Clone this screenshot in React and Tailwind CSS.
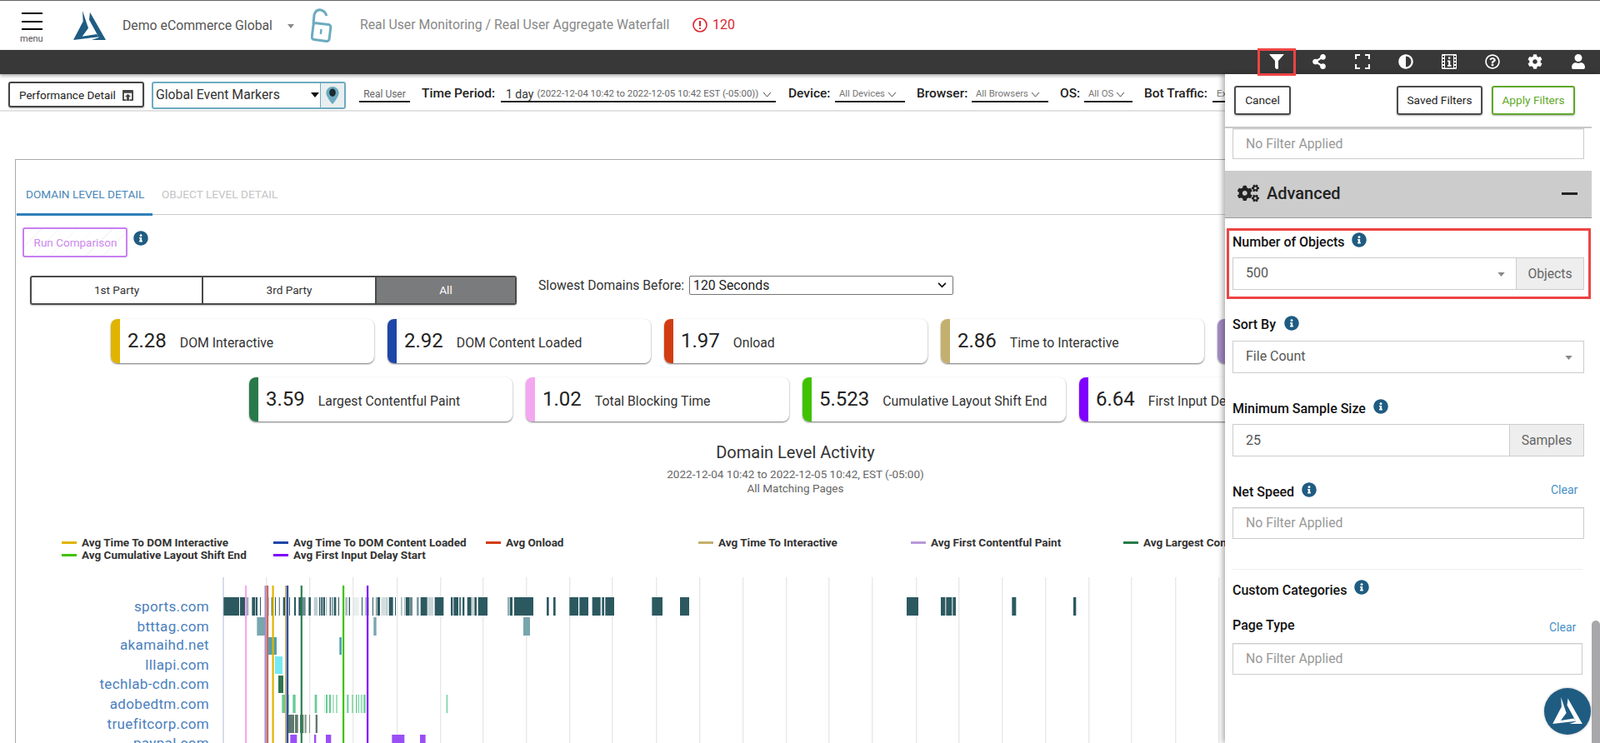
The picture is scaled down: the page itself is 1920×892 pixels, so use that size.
import React from "react";
import { FaShareAlt, FaAdjust, FaCog, FaUser, FaCogs, FaInfoCircle, FaRegQuestionCircle } from "react-icons/fa";

const z10 = (list) => list.map(([a, b, o]) => [255 + a / 3, (b - a) / 3, o]);
const z8 = (list) => list.map(([a, b, o]) => [500 + a / 3, (b - a) / 3, o]);
const z9 = (list) => list.map(([a, b, o]) => [980 + a / 3, (b - a) / 3, o]);

const sports = [
  ...z10([[40,96],[99,125],[126,131,0.35],[142,154],[156,162],[171,174],[197,202],[212,216],[225,228],[239,243,0.7],[254,262],[276,279],[294,300],[310,325],[325,335,0.7],[346,354],[365,378,0.3],[384,388],[391,397],[399,405],[408,412,0.4],[422,426],[430,433],[437,445],[453,456],[478,486,0.4],[491,495],[507,527,0.1],[537,540],[549,563,0.4],[576,579],[589,592],[594,603],[607,625,0.2],[626,630,0.4],[635,650],[657,660],[678,683,0.4],[690,695,0.4],[696,710],[711,720,0.7]]),
  ...z8([[0,8,0.6],[14,30],[30,38],[40,60,0.25],[65,97],[123,130],[133,150],[153,160,0.8],[165,172],[182,197],[200,205,0.4],[208,216],[221,255],[327,333,0.5],[335,345],[351,420],[468,476],[492,500],[550,582],[586,618],[632,662],[667,675],[679,711],[847,885],[948,981]]),
  ...z9([[324,366],[447,463],[466,487],[490,501],[703,718],[924,934]]),
];
const rows = [
  { y: 717, h: 22, fill: "#2c5960", bars: sports },
  { y: 741, h: 22, fill: "#78a6ad", bars: [...z10([[160,190],[580,590]]), ...z8([[384,408]])] },
  { y: 765, h: 21, fill: "#509fac", bars: z10([[196,231],[457,465]]) },
  { y: 788, h: 21, fill: "#74e9f3", bars: z10([[225,252]]) },
  { y: 811, h: 21, fill: "#2f7350", bars: z10([[237,255]]) },
  { y: 834, h: 22, fill: "#68cb92", bars: [...z10([[250,275],[289,299],[368,376],[403,405,0.5],[408,414],[420,426],[432,438,0.5],[444,450,0.6],[484,490],[502,506],[516,520],[525,528],[533,540,0.6],[544,551]]), ...z8([[107,111]])] },
  { y: 858, h: 22, fill: "#5f7a6c", bars: z10([[272,294],[297,308],[315,328],[332,338,0.8],[348,351,0.8],[371,378]]) },
  { y: 882, h: 22, fill: "#9a4ff5", bars: [...z10([[280,304],[366,373],[408,427],[646,691]]), ...z8([[12,32]])] },
];
const gridX = [319,371,423,476,528,579,631,683,734,787,839,891,943,994,1046,1099,1150,1202,1254,1306,1357,1410,1462];
const markers = [
  [295, "#f7a8f2"], [318.5, "#a58bc6"], [321, "#cf6a55"], [327.5, "#e0b400"], [343, "#c4b06e"], [345, "#2b4fb0"], [361.7, "#2a8050"], [412, "#3fc200"], [441, "#7f00ff"],
];
const domains = [
  ["sports.com", "top-[716px]"], ["btttag.com", "top-[740px]"], ["akamaihd.net", "top-[762px]"], ["lllapi.com", "top-[786px]"],
  ["techlab-cdn.com", "top-[809px]"], ["adobedtm.com", "top-[833px]"], ["truefitcorp.com", "top-[857px]"], ["paypal.com", "top-[880px]"],
];

function Logo({ className, color }) {
  return (
    <svg viewBox="0 0 117 105" className={className} fill={color}>
      <path d="M0 105 L35 38 L33 0 L54 62 L32 92 L84 84 L92 94 Z" />
      <path d="M60 5 L117 105 L66 105 L92 96 L57 32 Z" />
    </svg>
  );
}
function Caret({ className }) {
  return (
    <svg viewBox="0 0 10 6" className={className} fill="#888"><path d="M0 0H10L5 6Z" /></svg>
  );
}
function Chev({ className }) {
  return (
    <svg viewBox="0 0 12 8" className={className} fill="none" stroke="#333" strokeWidth="1"><path d="M1 1L6 7L11 1" /></svg>
  );
}
function Card({ bar, value, label }) {
  return (
    <div className="flex h-[53px] w-[316px] shrink-0 items-center overflow-hidden rounded-lg bg-white shadow-[0_1px_2px_rgba(0,0,0,0.55)]">
      <div className={"h-full w-[11px] shrink-0 " + bar} />
      <span className="ml-[9px] text-[24px] leading-none text-[#222] -mt-[1px]">{value}</span>
      <span className="ml-[16px] text-[15.8px] text-[#333] mt-[5px] whitespace-nowrap">{label}</span>
    </div>
  );
}
function Legend({ line, text, className }) {
  return (
    <div className={"absolute flex items-center whitespace-nowrap " + className}>
      <span className={"h-[3px] w-[18px] " + line} />
      <span className="ml-[6px] text-[13.5px] font-bold text-[#333] leading-none">{text}</span>
    </div>
  );
}
function Info({ className }) {
  return <FaInfoCircle className={"absolute text-[#1f5c82] " + className} size={18} />;
}
function Label({ children, className }) {
  return <div className={"absolute left-[1479px] text-[16px] font-medium leading-none text-[#111] " + className}>{children}</div>;
}
function Empty({ className }) {
  return (
    <div className={"absolute left-[1479px] flex items-center border border-[#ccc] pl-[15px] text-[15.8px] text-[#999] shadow-[inset_0_1px_1px_rgba(0,0,0,0.08)] " + className}>No Filter Applied</div>
  );
}

export default function App() {
  return (
    <div className="relative h-[892px] w-[1920px] overflow-hidden bg-white text-[#333] [font-family:Roboto,sans-serif]">
      {/* Top header */}
      <div className="absolute left-0 top-0 h-[60px] w-full border-t border-[#666]">
        <div className="absolute left-[26px] top-[14px] flex h-[21px] w-[25px] flex-col justify-between">
          <span className="h-[2px] bg-black" /><span className="h-[2px] bg-black" /><span className="h-[2px] bg-black" />
        </div>
        <div className="absolute left-[24px] top-[40px] text-[11px] leading-none text-[#555]">menu</div>
        <Logo className="absolute left-[88px] top-[12px] h-[35px] w-[39px]" color="#1f5c82" />
        <div className="absolute left-[147px] top-[20px] text-[15.8px] leading-[19px] text-[#555]">Demo eCommerce Global</div>
        <Caret className="absolute left-[345px] top-[28px] h-[5px] w-[8px]" />
        <svg viewBox="0 0 26 42" className="absolute left-[373px] top-[9px] h-[42px] w-[26px]" fill="none" stroke="#6cabc0" strokeWidth="3">
          <path d="M3 19 L4 8 Q6 1 12 2 Q17 3 19 9" />
          <rect x="2" y="18.5" width="21" height="20" rx="3" transform="rotate(7 12 29)" />
          <path d="M12.5 25 L11.8 31" strokeWidth="2.4" />
        </svg>
        <div className="absolute left-[432px] top-[19px] text-[15.8px] leading-[19px] text-[#888]">Real User Monitoring / Real User Aggregate Waterfall</div>
        <svg viewBox="0 0 18 18" className="absolute left-[831px] top-[20px] h-[18px] w-[18px]" fill="none" stroke="#d9272e" strokeWidth="1.6">
          <circle cx="9" cy="9" r="8" /><path d="M9 4V10.5" strokeWidth="2" /><path d="M9 12.2V14" strokeWidth="2" />
        </svg>
        <div className="absolute left-[855px] top-[19px] text-[16px] leading-[19px] text-[#d9272e]">120</div>
      </div>

      {/* Main content, cut off under the filter panel */}
      <div className="absolute left-0 top-0 h-[892px] w-[1470px] overflow-hidden">
        {/* Filter row */}
        <div className="absolute left-0 top-[89px] h-[45px] w-full border-b-2 border-[#e2e2e2]">
          <div className="absolute left-[10px] top-[9px] flex h-[31px] w-[163px] items-center rounded-[3px] border-2 border-[#444] pl-[11px] pt-[2px] text-[13.5px] text-[#222] shadow-[0_1px_2px_rgba(0,0,0,0.3)]">
            Performance Detail
            <svg viewBox="0 0 14 14" className="ml-[8px] h-[13px] w-[13px]" fill="#444"><path d="M1 0H13a1 1 0 0 1 1 1V13a1 1 0 0 1-1 1H9V12H12V4H2V12H5V14H1a1 1 0 0 1-1-1V1a1 1 0 0 1 1-1Z" /><path d="M7 5L11 9H8.5V14H5.5V9H3Z" /></svg>
          </div>
          <div className="absolute left-[182px] top-[9px] flex h-[33px] w-[233px] overflow-hidden rounded-[3px] border-2 border-[#6cabc0]">
            <div className="flex flex-1 items-center pb-[2px] pl-[3px] text-[15.8px] text-[#333]">
              Global Event Markers
              <svg viewBox="0 0 10 6" className="ml-[37px] h-[6px] w-[10px]" fill="#111"><path d="M0 0H10L5 6Z" /></svg>
            </div>
            <div className="flex w-[29px] items-center justify-center border-l border-[#6cabc0] bg-[#e9eeef]">
              <svg viewBox="0 0 16 22" className="h-[21px] w-[16px]"><path d="M8 0C3.6 0 0 3.6 0 8C0 13 8 22 8 22S16 13 16 8C16 3.6 12.4 0 8 0Z" fill="#6cabc0" /><ellipse cx="8" cy="7.5" rx="4" ry="5" fill="#1a2a30" /></svg>
            </div>
          </div>
          <div className="absolute left-[431px] top-[14px] h-[20px] w-[61px] border-b-2 border-[#222] pt-[1px] text-center text-[12px] leading-[18px] text-[#666]">Real User</div>
          <div className="absolute left-[506px] top-[12px] text-[15.5px] font-medium leading-[22px] text-[#222]">Time Period:</div>
          <div className="absolute left-[601px] top-[11px] flex h-[23px] w-[330px] items-center whitespace-nowrap border-b-2 border-[#222] pl-[6px] pt-[5px]">
            <span className="text-[14px] text-[#333]">1 day</span>
            <span className="ml-[4px] text-[11.4px] text-[#666]">(2022-12-04 10:42 to 2022-12-05 10:42 EST (-05:00))</span>
            <Chev className="ml-[5px] h-[7px] w-[11px]" />
          </div>
          <div className="absolute left-[946px] top-[12px] text-[15.5px] font-medium leading-[22px] text-[#222]">Device:</div>
          <div className="absolute left-[1002px] top-[11px] flex h-[23px] w-[84px] items-center whitespace-nowrap border-b-2 border-[#222] pl-[5px] pt-[5px] text-[11.3px] text-[#777]">All Devices<Chev className="ml-[3px] h-[7px] w-[11px]" /></div>
          <div className="absolute left-[1100px] top-[12px] text-[15.5px] font-medium leading-[22px] text-[#222]">Browser:</div>
          <div className="absolute left-[1166px] top-[11px] flex h-[23px] w-[92px] items-center whitespace-nowrap border-b-2 border-[#222] pl-[5px] pt-[5px] text-[11.3px] text-[#777]">All Browsers<Chev className="ml-[3px] h-[7px] w-[11px]" /></div>
          <div className="absolute left-[1272px] top-[12px] text-[15.5px] font-medium leading-[22px] text-[#222]">OS:</div>
          <div className="absolute left-[1301px] top-[11px] flex h-[23px] w-[58px] items-center whitespace-nowrap border-b-2 border-[#222] pl-[5px] pt-[5px] text-[11.3px] text-[#777]">All OS<Chev className="ml-[3px] h-[7px] w-[11px]" /></div>
          <div className="absolute left-[1373px] top-[12px] text-[15.5px] font-medium leading-[22px] text-[#222]">Bot Traffic:</div>
          <div className="absolute left-[1455px] top-[11px] flex h-[23px] w-[60px] items-center whitespace-nowrap border-b-2 border-[#222] pl-[5px] pt-[5px] text-[11.3px] text-[#777]">Exclude</div>
        </div>

        {/* Main card */}
        <div className="absolute left-[18px] top-[191px] h-[720px] w-[1500px] border border-[#aaa]" />
        <div className="absolute left-[19px] top-[257px] h-px w-[1460px] bg-[#ccc]" />
        <div className="absolute left-[20px] top-[256px] h-[3px] w-[163px] bg-[#2f80b8]" />
        <div className="absolute left-[31px] top-[225px] text-[13.6px] leading-[16px] text-[#4a86b8]">DOMAIN LEVEL DETAIL</div>
        <div className="absolute left-[194px] top-[225px] text-[13.6px] leading-[16px] text-[#c4c4c4]">OBJECT LEVEL DETAIL</div>
        <div className="absolute left-[27px] top-[273px] flex h-[36px] w-[126px] items-center justify-center rounded-[3px] border-2 border-[#c77ff0] bg-[repeating-linear-gradient(135deg,#fff_0,#fff_14px,#eee_15px)] pl-[1px] text-[13.5px] text-[#cc88ee]">Run Comparison</div>
        <Info className="left-[160px] top-[277px]" />

        <div className="absolute left-[36px] top-[331px] flex h-[35px] w-[584px] overflow-hidden rounded-[3px] border-2 border-[#4a4a4a] text-[13.6px] text-[#333] shadow-[0_1px_2px_rgba(0,0,0,0.25)]">
          <div className="flex w-[206px] items-center justify-center border-r-2 border-[#4a4a4a]">1st Party</div>
          <div className="flex w-[206px] items-center justify-center">3rd Party</div>
          <div className="flex flex-1 items-center justify-center border-l-2 border-[#4a4a4a] bg-[#7a7b7d] text-white">All</div>
        </div>
        <div className="absolute left-[646px] top-[333px] text-[15.7px] leading-[20px] text-[#333]">Slowest Domains Before:</div>
        <div className="absolute left-[827px] top-[331px] flex h-[23px] w-[317px] items-center justify-between rounded-[2px] border border-[#767676] pl-[4px] pr-[7px] text-[15.8px] text-[#222]">
          120 Seconds
          <svg viewBox="0 0 12 8" className="h-[7px] w-[11px]" fill="none" stroke="#111" strokeWidth="2"><path d="M1 1L6 6L11 1" /></svg>
        </div>

        <div className="absolute left-[133px] top-[383px] flex gap-[16px]">
          <Card bar="bg-[#e0b400]" value="2.28" label="DOM Interactive" />
          <Card bar="bg-[#1e46a8]" value="2.92" label="DOM Content Loaded" />
          <Card bar="bg-[#d23c10]" value="1.97" label="Onload" />
          <Card bar="bg-[#c4b06e]" value="2.86" label="Time to Interactive" />
          <Card bar="bg-[#a58bc6]" value="2.04" label="First Contentful Paint" />
        </div>
        <div className="absolute left-[299px] top-[453px] flex gap-[16px]">
          <Card bar="bg-[#287a4a]" value="3.59" label="Largest Contentful Paint" />
          <Card bar="bg-[#f5a6f0]" value="1.02" label="Total Blocking Time" />
          <Card bar="bg-[#3fc200]" value="5.523" label="Cumulative Layout Shift End" />
          <Card bar="bg-[#7f00ff]" value="6.64" label="First Input Delay Start" />
        </div>

        <div className="absolute left-0 top-[531px] w-[1909px] text-center text-[20px] leading-[24px] text-[#333]">Domain Level Activity</div>
        <div className="absolute left-0 top-[561px] w-[1909px] text-center text-[13.5px] leading-[16px] text-[#666]">2022-12-04 10:42 to 2022-12-05 10:42, EST (-05:00)</div>
        <div className="absolute left-0 top-[578px] w-[1909px] text-center text-[13.5px] leading-[16px] text-[#666]">All Matching Pages</div>

        <Legend line="bg-[#e0b400]" text="Avg Time To DOM Interactive" className="left-[74px] top-[645px]" />
        <Legend line="bg-[#1e46a8]" text="Avg Time To DOM Content Loaded" className="left-[328px] top-[645px]" />
        <Legend line="bg-[#d23c10]" text="Avg Onload" className="left-[583px] top-[645px]" />
        <Legend line="bg-[#c4b06e]" text="Avg Time To Interactive" className="left-[838px] top-[645px]" />
        <Legend line="bg-[#b99ad8]" text="Avg First Contentful Paint" className="left-[1093px] top-[645px]" />
        <Legend line="bg-[#287a4a]" text="Avg Largest Contentful Paint" className="left-[1348px] top-[645px]" />
        <Legend line="bg-[#3fc200]" text="Avg Cumulative Layout Shift End" className="left-[74px] top-[660px]" />
        <Legend line="bg-[#7f00ff]" text="Avg First Input Delay Start" className="left-[328px] top-[660px]" />

        {domains.map(([name, top]) => (
          <div key={name} className={"absolute left-0 w-[251px] text-right text-[17px] leading-[24px] tracking-[0.35px] text-[#4a80bd] [font-family:'DejaVu_Sans',sans-serif] " + top}>{name}</div>
        ))}

        <svg className="absolute left-0 top-0 h-[892px] w-[1470px]" viewBox="0 0 1470 892">
          <rect x="267" y="693" width="2" height="199" fill="#d8dcee" />
          {gridX.map((x) => <rect key={x} x={x} y="693" width="1.4" height="199" fill="#e8e8e8" />)}
          {rows.map((r) => r.bars.map(([x, w, o], i) => (
            <rect key={r.y + "-" + i} x={x} y={r.y} width={w} height={r.h} fill={r.fill} opacity={o === undefined ? 1 : o} />
          )))}
          {markers.map(([x, c]) => <rect key={x} x={x - 1} y="703" width="2.2" height="189" fill={c} />)}
        </svg>
      </div>

      {/* Dark toolbar */}
      <div className="absolute left-0 top-[60px] h-[29px] w-full bg-[#383838] shadow-[0_2px_4px_rgba(0,0,0,0.35)]" />

      {/* Filter panel */}
      <div className="absolute left-[1470px] top-[89px] h-[803px] w-[450px] bg-white shadow-[-3px_0_6px_rgba(0,0,0,0.3)]" />
      <div className="absolute left-[1470px] top-[152px] h-[2px] w-[440px] bg-[#c8c8c8]" />
      <div className="absolute left-[1481px] top-[103px] flex h-[35px] w-[68px] items-center justify-center rounded-[3px] border-2 border-[#4a4a4a] text-[13.7px] text-[#222] shadow-[0_1px_2px_rgba(0,0,0,0.3)]">Cancel</div>
      <div className="absolute left-[1676px] top-[103px] flex h-[35px] w-[103px] items-center justify-center rounded-[3px] border-2 border-[#4a4a4a] text-[13.7px] text-[#222] shadow-[0_1px_2px_rgba(0,0,0,0.3)]">Saved Filters</div>
      <div className="absolute left-[1790px] top-[103px] flex h-[35px] w-[100px] items-center justify-center rounded-[3px] border-2 border-[#5fa82a] text-[13.7px] text-[#5fa82a] shadow-[0_1px_2px_rgba(0,0,0,0.3)]">Apply Filters</div>

      <Empty className="top-[154px] h-[37px] w-[422px]" />

      <div className="absolute left-[1470px] top-[205px] flex h-[57px] w-[440px] items-center justify-between border-b border-[#999] bg-[#cccccc] pb-[2px] pl-[15px] pr-[17px]">
        <div className="flex items-center text-[20px] font-medium text-[#222]">
          <FaCogs size={26} className="mr-[9px] text-[#222]" />Advanced
        </div>
        <span className="h-[3px] w-[19px] bg-[#222]" />
      </div>

      <div className="absolute left-[1472px] top-[274px] h-[85px] w-[437px] border-[3px] border-[#ee4444]" />
      <Label className="top-[283px]">Number of Objects</Label>
      <Info className="left-[1622px] top-[279px]" />
      <div className="absolute left-[1479px] top-[309px] flex h-[39px] w-[422px] border border-[#ccc] text-[16px] text-[#555]">
        <div className="relative flex flex-1 items-center pb-[2px] pl-[15px]">500<Caret className="absolute right-[13px] top-[17px] h-[5px] w-[9px]" /></div>
        <div className="flex w-[81px] items-center justify-center border-l border-[#ccc] bg-[#eeeeee] text-[15.7px] text-[#666]">Objects</div>
      </div>

      <Label className="top-[382px]">Sort By</Label>
      <Info className="left-[1541px] top-[379px]" />
      <div className="absolute left-[1479px] top-[409px] flex h-[39px] w-[422px] items-center border border-[#ccc] pb-[2px] pl-[15px] text-[16px] text-[#555]">
        File Count<Caret className="absolute right-[13px] top-[17px] h-[5px] w-[9px]" />
      </div>

      <Label className="top-[483px]">Minimum Sample Size</Label>
      <Info className="left-[1648px] top-[479px]" />
      <div className="absolute left-[1479px] top-[509px] flex h-[39px] w-[422px] border border-[#ccc] text-[16px] text-[#555]">
        <div className="flex flex-1 items-center pl-[15px]">25</div>
        <div className="flex w-[89px] items-center justify-center border-l border-[#ccc] bg-[#eeeeee] text-[15.7px] text-[#666]">Samples</div>
      </div>

      <Label className="top-[583px]">Net Speed</Label>
      <Info className="left-[1562px] top-[579px]" />
      <div className="absolute left-[1861px] top-[580px] text-[14px] leading-[17px] text-[#4a90c8]">Clear</div>
      <Empty className="top-[609px] h-[38px] w-[422px]" />

      <div className="absolute left-[1479px] top-[683px] h-px w-[420px] bg-[#eeeeee]" />

      <Label className="top-[701px]">Custom Categories</Label>
      <Info className="left-[1625px] top-[696px]" />
      <Label className="top-[743px]">Page Type</Label>
      <div className="absolute left-[1859px] top-[745px] text-[14px] leading-[17px] text-[#4a90c8]">Clear</div>
      <Empty className="top-[772px] h-[38px] w-[420px]" />

      <div className="absolute left-[1910px] top-[745px] h-[147px] w-[10px] rounded-t-[5px] bg-[#a8a8ab]" />
      <div className="absolute left-[1853px] top-[826px] flex h-[56px] w-[56px] items-center justify-center rounded-full bg-[#1f5c82] shadow-[0_0_3px_rgba(0,0,0,0.3)]">
        <Logo className="h-[32px] w-[36px] -mt-[2px]" color="#ffffff" />
      </div>

      {/* Toolbar icons */}
      <div className="absolute left-[1509px] top-[58px] h-[33px] w-[46px] border-[3px] border-[#ee4444]" />
      <svg viewBox="0 0 18 18" className="absolute left-[1523px] top-[65px] h-[18px] w-[18px]" fill="#fff"><path d="M0 0H18L11 8V17.5L8.5 18L7 16V8Z" /></svg>
      <FaShareAlt size={18} color="#fff" className="absolute left-[1574px] top-[65px]" />
      <svg viewBox="0 0 18 18" className="absolute left-[1626px] top-[65px] h-[18px] w-[18px]" fill="none" stroke="#fff" strokeWidth="2.2"><path d="M1 6V1H6M12 1H17V6M17 12V17H12M6 17H1V12" /></svg>
      <FaAdjust size={18} color="#fff" className="absolute left-[1678px] top-[65px]" />
      <svg viewBox="0 0 18 18" className="absolute left-[1730px] top-[65px] h-[18px] w-[18px]">
        <rect width="18" height="18" rx="1" fill="#fff" />
        <path d="M1 2H3V4H1ZM1 6H3V8H1ZM1 10H3V12H1ZM1 14H3V16H1ZM15 2H17V4H15ZM15 6H17V8H15ZM15 10H17V12H15ZM15 14H17V16H15Z" fill="#383838" />
        <rect x="4" y="1.5" width="10" height="15" fill="#383838" />
        <path d="M8 3.5H10.3V5.8H8ZM7 7.5H10.3V13H11.5V14.7H7V13H8.2V9.2H7Z" fill="#fff" />
      </svg>
      <FaRegQuestionCircle size={18} color="#fff" className="absolute left-[1782px] top-[65px]" />
      <FaCog size={18} color="#fff" className="absolute left-[1833px] top-[65px]" />
      <FaUser size={18} color="#fff" className="absolute left-[1885px] top-[65px]" />
    </div>
  );
}
